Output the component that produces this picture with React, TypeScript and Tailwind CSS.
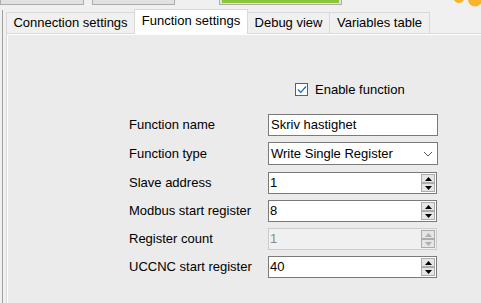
const TABS = [
  { label: "Connection settings", w: "w-[129px]" },
  { label: "Function settings", w: "w-[114px]", active: true },
  { label: "Debug view", w: "w-[83px]" },
  { label: "Variables table", w: "w-[101px]" },
]

function Arrow({ up, disabled }: { up?: boolean; disabled?: boolean }) {
  return (
    <div className="flex h-[9px] w-[14px] items-center justify-center border border-[#acacac] bg-[#e5e5e5]">
      <svg width="7" height="4" viewBox="0 0 7 4">
        <polygon
          points={up ? "0,4 7,4 3.5,0" : "0,0 7,0 3.5,4"}
          fill={disabled ? "#b0b0b0" : "#000"}
        />
      </svg>
    </div>
  )
}

function NumberBox({ value, disabled }: { value: string; disabled?: boolean }) {
  return (
    <div
      className={`flex h-[22px] w-[169px] items-stretch border py-px pr-px ${
        disabled ? "border-[#cccccc] bg-[#f0f0f0] text-[#8c8c8c]" : "border-[#7a7a7a] bg-white text-black"
      }`}
    >
      <span className="flex flex-1 items-center pl-[1px]">{value}</span>
      <div className="flex flex-col justify-center gap-0">
        <Arrow up disabled={disabled} />
        <Arrow disabled={disabled} />
      </div>
    </div>
  )
}

function Row({ label, children, gap = "mt-[6px]" }: { label: string; children: React.ReactNode; gap?: string }) {
  return (
    <div className={`flex items-center ${gap}`}>
      <div className="w-[139px]">{label}</div>
      {children}
    </div>
  )
}

export default function App() {
  return (
    <div
      className="h-[303px] w-[481px] overflow-hidden bg-[#f0f0f0] text-[13px] text-black"
      style={{ fontFamily: '"Liberation Sans", Arial, sans-serif' }}
    >
      {/* strip of buttons from the window above */}
      <div className="flex h-[10px] items-start">
        <div className="h-[5px] w-[84px] border border-t-0 border-[#adadad] bg-[#e1e1e1]" />
        <div className="ml-[8px] h-[5px] w-[83px] border border-t-0 border-[#adadad] bg-[#e1e1e1]" />
        <div className="ml-[44px] flex h-[5px] w-[123px] border border-t-0 border-[#adadad] bg-[#e1e1e1] px-[2px]">
          <div className="h-[3px] w-full bg-[#8cc43c]" />
        </div>
        <svg className="ml-auto" width="28" height="8" viewBox="0 0 28 8">
          <ellipse cx="6" cy="-1" rx="5" ry="4" fill="#f7b52c" />
          <ellipse cx="22" cy="0" rx="7" ry="6.5" fill="#f7b52c" />
        </svg>
      </div>

      <div className="flex h-[293px]">
        <div className="ml-[2px] w-px bg-[#a0a0a0]" />
        <div className="ml-[3px] flex flex-1 flex-col">
          <div className="flex h-[23px] items-end">
            {TABS.map((t) =>
              t.active ? (
                <div
                  key={t.label}
                  className={`${t.w} relative z-10 -mb-px -ml-px flex h-[25px] items-center justify-center border border-b-0 border-[#d9d9d9] bg-white pb-[3px]`}
                >
                  {t.label}
                </div>
              ) : (
                <div
                  key={t.label}
                  className={`${t.w} -ml-px flex h-[21px] items-center justify-center border border-b-0 border-[#d9d9d9] bg-[#f0f0f0] first:ml-0`}
                >
                  {t.label}
                </div>
              )
            )}
          </div>

          <div className="flex-1 border-l border-t border-[#d9d9d9]">
            <div className="h-full border-l border-t border-white bg-[#ebebeb] pl-[121px]">
              <div className="mt-[48px] flex h-[13px] items-center">
                <div className="ml-[166px] flex h-[13px] w-[13px] items-center justify-center border border-[#0078d7] bg-white">
                  <svg width="10" height="9" viewBox="0 0 10 9">
                    <path d="M1 4.5 L3.8 7.3 L9 1.5" fill="none" stroke="#0a68c8" strokeWidth="1.2" />
                  </svg>
                </div>
                <span className="ml-[7px]">Enable function</span>
              </div>

              <Row label="Function name" gap="mt-[18px]">
                <div className="flex h-[22px] w-[170px] items-center border border-[#7a7a7a] bg-white pl-[2px]">
                  Skriv hastighet
                </div>
              </Row>
              <Row label="Function type">
                <div className="flex h-[23px] w-[170px] items-center justify-between border border-[#7a7a7a] bg-white pl-[2px] pr-[4px]">
                  <span>Write Single Register</span>
                  <svg width="10" height="6" viewBox="0 0 10 6">
                    <path d="M1 1 L5 5 L9 1" fill="none" stroke="#5a5a5a" strokeWidth="1" />
                  </svg>
                </div>
              </Row>
              <Row label="Slave address" gap="mt-[7px]">
                <NumberBox value="1" />
              </Row>
              <Row label="Modbus start register">
                <NumberBox value="8" />
              </Row>
              <Row label="Register count">
                <NumberBox value="1" disabled />
              </Row>
              <Row label="UCCNC start register">
                <NumberBox value="40" />
              </Row>
            </div>
          </div>
        </div>
      </div>
    </div>
  )
}
